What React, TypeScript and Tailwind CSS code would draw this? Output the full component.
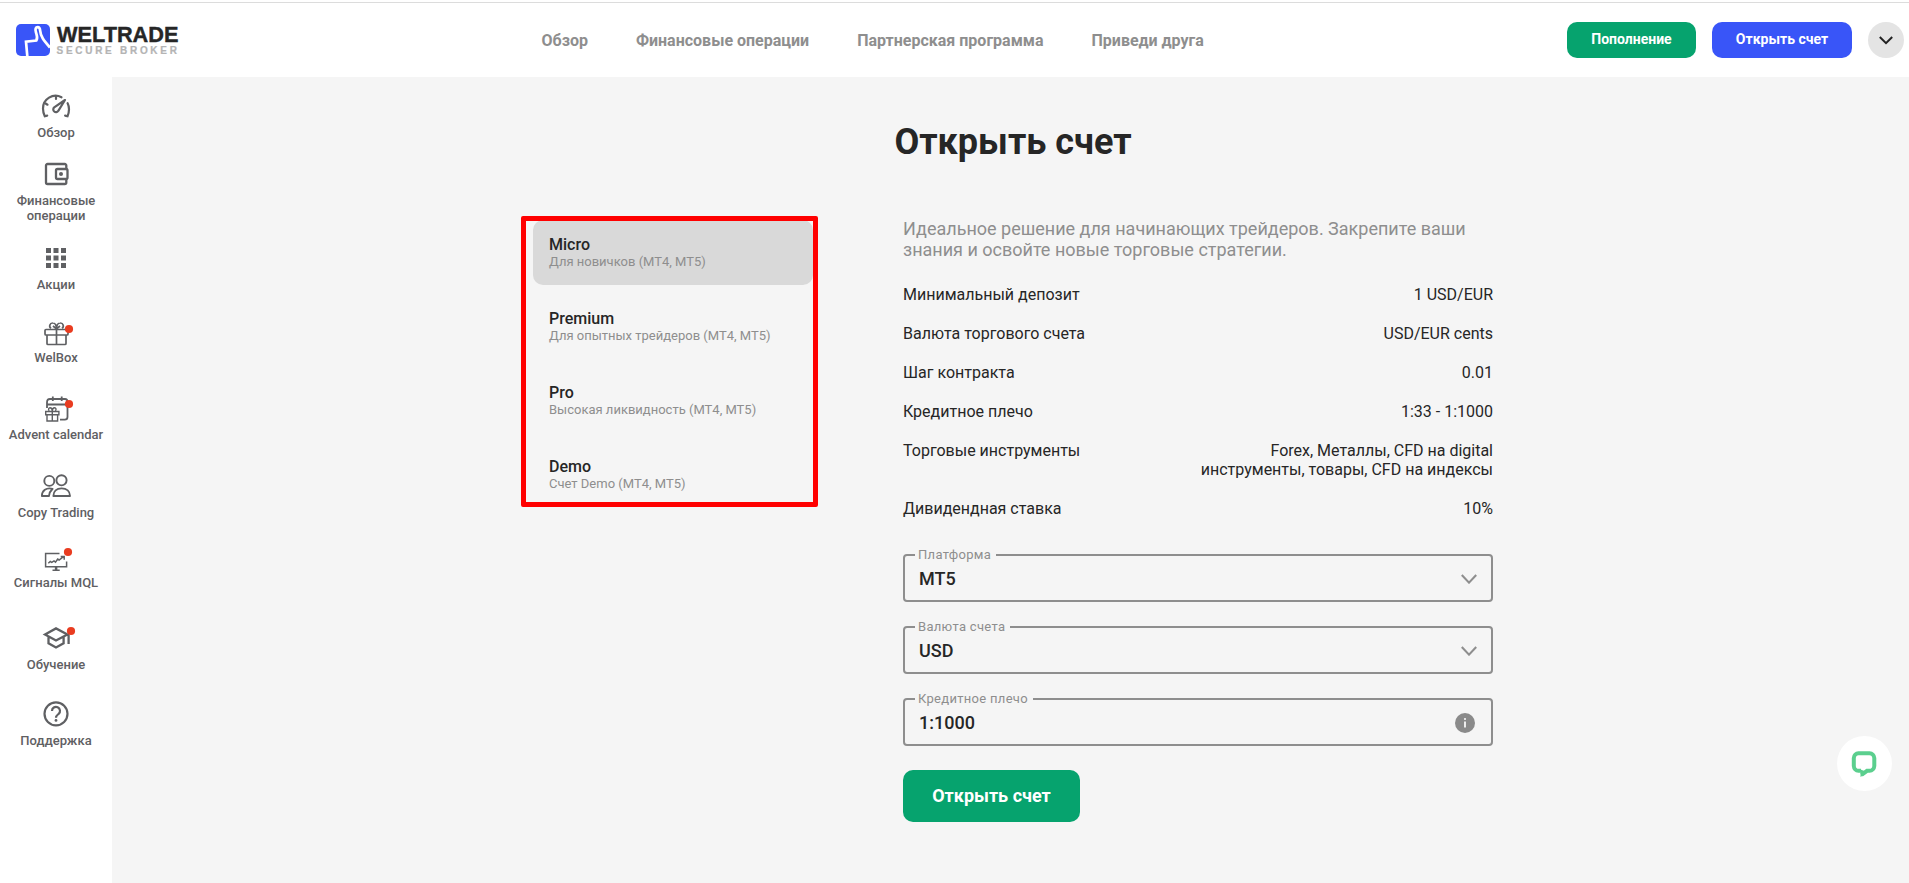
import { ReactNode, useState } from 'react';
import clsx from 'clsx';

const navLinks = ['Обзор', 'Финансовые операции', 'Партнерская программа', 'Приведи друга'];

const accounts = [
  { id: 'micro', title: 'Micro', note: 'Для новичков (MT4, MT5)' },
  { id: 'premium', title: 'Premium', note: 'Для опытных трейдеров (MT4, MT5)' },
  { id: 'pro', title: 'Pro', note: 'Высокая ликвидность (MT4, MT5)' },
  { id: 'demo', title: 'Demo', note: 'Счет Demo (MT4, MT5)' },
];

const details = [
  { label: 'Минимальный депозит', value: '1 USD/EUR' },
  { label: 'Валюта торгового счета', value: 'USD/EUR cents' },
  { label: 'Шаг контракта', value: '0.01' },
  { label: 'Кредитное плечо', value: '1:33 - 1:1000' },
  { label: 'Торговые инструменты', value: 'Forex, Металлы, CFD на digital инструменты, товары, CFD на индексы' },
  { label: 'Дивидендная ставка', value: '10%' },
];

const Dot = ({ x, y }: { x: number; y: number }) => (
  <circle cx={x} cy={y} r="4.1" fill="#e93c20" stroke="none" />
);

// every sidebar icon is drawn on a 32x28 canvas
const sideItems: { label: string; space: string; icon: ReactNode }[] = [
  {
    label: 'Обзор',
    space: 'mt-4',
    icon: (
      <g strokeWidth="2.2" strokeLinecap="round">
        <path d="M7.2 22.600 4.800 23.200q-1.800-3.600-1.800-7.600A12.600 12.600 0 0 1 21.500 4.300" />
        <path d="M27.600 10.200q1.400 2.600 1.400 6 0 3.600-1.500 7l-2.400-.6" />
        <path d="M16 3v3M5.600 10.500l1.900 1.200" />
        <path d="M25 7 14.200 14.400a2.700 2.700 0 1 0 4.100 3.400Z" strokeLinejoin="round" />
      </g>
    ),
  },
  {
    label: 'Финансовые операции',
    space: 'mt-[21px]',
    icon: (
      <g strokeWidth="2.3">
        <path d="M26.300 8V4.500a1.500 1.500 0 0 0-1.500-1.500H7.500A1.500 1.500 0 0 0 6 4.500v17A1.500 1.500 0 0 0 7.500 23h17.300a1.500 1.500 0 0 0 1.500-1.500V18" />
        <rect x="16" y="8" width="11.500" height="10" rx="1.500" />
        <circle cx="21" cy="13" r="2" fill="#5f6063" stroke="none" />
      </g>
    ),
  },
  {
    label: 'Акции',
    space: 'mt-[22px]',
    icon: (
      <path
        fill="#5f6063"
        stroke="none"
        d="M6 3h5v5H6zM13.500 3h5v5h-5zM21 3h5v5h-5zM6 10.500h5v5H6zM13.500 10.500h5v5h-5zM21 10.500h5v5h-5zM6 18h5v5H6zM13.500 18h5v5h-5zM21 18h5v5h-5z"
      />
    ),
  },
  {
    label: 'WelBox',
    space: 'mt-[26px]',
    icon: (
      <g strokeWidth="1.700">
        <rect x="5" y="11.500" width="23" height="5.500" rx="1" />
        <path d="M7 17v8.500q0 1 1 1h17q1 0 1-1V17M16.500 11v15.500" />
        <path d="M16.500 11c0-4-1.600-6-3.700-6a2.900 2.900 0 0 0-1.800 5.300M16.500 11c0-4 1.600-6 3.700-6a2.900 2.900 0 0 1 1.800 5.300M13 8l3.500 3L20 8" />
        <Dot x={29} y={11} />
      </g>
    ),
  },
  {
    label: 'Advent calendar',
    space: 'mt-[30px]',
    icon: (
      <g strokeWidth="1.800">
        <path d="M7 13V7.500Q7 4 10 4h15q2.500 0 2.500 3v15q0 2.700-2.700 2.700H20M7 9.500h20M12.800 1.500V6M21.700 1.500V6" />
        <path d="M5.700 16.500h13.200v3.300H5.700zM7 19.800v6.200h10.600v-6.200M12.300 16.500V26" strokeWidth="1.400" />
        <path d="M12.300 16.300c0-2.400-1-3.600-2.300-3.600s-2 1.900-.8 3.200M12.300 16.300c0-2.400 1-3.600 2.300-3.600s2 1.900.8 3.200" strokeWidth="1.400" />
        <Dot x={29} y={9} />
      </g>
    ),
  },
  {
    label: 'Copy Trading',
    space: 'mt-[31px]',
    icon: (
      <g strokeWidth="1.900">
        <circle cx="9.300" cy="7.900" r="5" />
        <circle cx="21.500" cy="7.300" r="5.100" />
        <path d="M13.400 23c0-4.700 3.200-7.600 8.200-7.600s8.400 2.900 8.400 7.600Z" strokeLinejoin="round" />
        <path d="M12.600 15.800C6.200 14.200 1.900 17.600 1.900 23H9q.3-4 3.600-7.200Z" strokeLinejoin="round" />
      </g>
    ),
  },
  {
    label: 'Сигналы MQL',
    space: 'mt-[23px]',
    icon: (
      <g strokeWidth="1.500">
        <path d="M19.500 10.600H5.600v13.200h21V18.500M12.500 27.200h7.200" />
        <path d="M16.100 24v3" strokeWidth="2.500" />
        <path d="m8.300 20.300 2-1.800 1.500.9 2.200-1.500 1.500 1.200 2.200-3 1.400.9 4.400-3.400M20.700 13.400h3.500v3.300" />
        <Dot x={28} y={9} />
      </g>
    ),
  },
  {
    label: 'Обучение',
    space: 'mt-[35px]',
    icon: (
      <g strokeWidth="2.300">
        <path d="M5 9.400 16 3.400l11.400 6L16 15.500ZM8.500 12v6.300L16 22.500l7.600-4.200V12M28.600 9.500V19" />
        <Dot x={31} y={6} />
      </g>
    ),
  },
  {
    label: 'Поддержка',
    space: 'mt-[29px]',
    icon: (
      <g strokeWidth="2.200">
        <circle cx="16" cy="12.800" r="11.500" />
        <path d="M12 9.900a4 4 0 1 1 6.600 3c-1.600 1.300-2.600 1.900-2.600 3.800" />
        <circle cx="16" cy="19.400" r="1.400" fill="#5f6063" stroke="none" />
      </g>
    ),
  },
];

function Logo() {
  return (
    <svg width="164" height="34" viewBox="0 0 164 34">
      <rect y="1" width="34" height="32" rx="5" fill="#3955f8" />
      <path
        d="M11.300 33 10 18.600 20.300 17.500C22 14.800 21.300 13.500 20 9.500c-1.100-3.500-.3-5.300 1.700-5.300 1.700 0 2.300 1.500 2.500 3.700.4 5.500 3.300 9.300 9.800 16.600"
        fill="none"
        stroke="#fff"
        strokeWidth="2.700"
      />
      <text x="41" y="18.700" fontFamily="Liberation Sans, Arial, sans-serif" fontWeight="700" fontSize="22" fill="#262626" stroke="#262626" strokeWidth="0.4" textLength="121.500" lengthAdjust="spacingAndGlyphs">
        WELTRADE
      </text>
      <text x="40.500" y="31.300" fontFamily="Liberation Sans, Arial, sans-serif" fontWeight="700" fontSize="10" fill="#b4b4b4" stroke="#b4b4b4" strokeWidth="0.200" letterSpacing="2.720">
        SECURE BROKER
      </text>
    </svg>
  );
}

function Field({ label, value, info }: { label: string; value: string; info?: boolean }) {
  return (
    <div className="relative flex h-12 items-center justify-between rounded border-2 border-[#8e8e8e] pr-3.5 pl-3.5">
      <span className="absolute -top-[9px] left-2.5 bg-[#f5f5f5] pr-[5px] pl-[3px] text-[13px] leading-[15px] tracking-[0.3px] text-[#8e8e8e]">
        {label}
      </span>
      <span className="text-[18px] leading-[21px] font-medium text-[#262626]">{value}</span>
      {info ? (
        <svg width="20" height="20" viewBox="0 0 20 20" className="mt-0.5 mr-0.5">
          <circle cx="10" cy="10" r="10" fill="#8a8a8a" />
          <path d="M10 8.500v6" stroke="#fff" strokeWidth="1.700" />
          <circle cx="10" cy="6" r="1" fill="#fff" />
        </svg>
      ) : (
        <svg width="16" height="10" viewBox="0 0 16 10" fill="none" stroke="#8e8e8e" strokeWidth="2.100" className="mt-px">
          <path d="m.8 1 7.200 7.600L15.200 1" />
        </svg>
      )}
    </div>
  );
}

export default function App() {
  const [active, setActive] = useState('micro');

  return (
    <div className="flex h-[883px] w-[1909px] flex-col overflow-hidden bg-white font-['Roboto',sans-serif] text-[#262626]">
      <div className="h-[3px] shrink-0 border-b border-[#dcdcdc]" />

      {/* Header */}
      <header className="flex h-[74px] shrink-0 items-center justify-between pr-[5px] pl-4">
        <div className="w-[525px]">
          <Logo />
        </div>
        <nav className="flex flex-1 gap-12 pl-[0.5px]">
          {navLinks.map((link) => (
            <a key={link} href="#" className="text-[16px] leading-[19px] font-bold text-[#8e8e8e]">
              {link}
            </a>
          ))}
        </nav>
        <div className="flex gap-4">
          <button className="h-9 w-[129px] rounded-[10px] bg-[#06a36e] pb-0.5 text-[14px] font-bold text-white">Пополнение</button>
          <button className="h-9 w-[140px] rounded-[10px] bg-[#3955f8] pb-0.5 text-[14px] font-bold text-white">Открыть счет</button>
          <button className="flex size-9 items-center justify-center rounded-full bg-[#e4e4e4]" aria-label="Меню">
            <svg width="14" height="9" viewBox="0 0 14 9" fill="none" stroke="#222" strokeWidth="2" className="mt-px">
              <path d="m.8 1 6.200 6.200L13.200 1" />
            </svg>
          </button>
        </div>
      </header>

      <div className="flex flex-1">
        {/* Sidebar */}
        <aside className="flex w-28 shrink-0 flex-col items-center">
          {sideItems.map((item) => (
            <a key={item.label} href="#" className={clsx('flex w-full flex-col items-center gap-1', item.space)}>
              <svg width="32" height="28" viewBox="0 0 32 28" fill="none" stroke="#5f6063" className="overflow-visible">
                {item.icon}
              </svg>
              <span className="text-center text-[13px] leading-[15px] font-medium text-[#5f6063]">{item.label}</span>
            </a>
          ))}
        </aside>

        {/* Account opening */}
        <main className="flex-1 bg-[#f5f5f5] pl-[421px]">
          <div className="w-[960px]">
            <h1 className="pt-[44px] text-center text-[36px] leading-[42px] font-bold">Открыть счет</h1>

            <div className="mt-[55px] flex justify-between">
              <div className="relative flex w-[280px] flex-col gap-[9px] pt-0.5">
                {accounts.map((a) => (
                  <button
                    key={a.id}
                    onClick={() => setActive(a.id)}
                    className={clsx(
                      'flex h-[65px] flex-col justify-center rounded-[10px] pb-px pl-4 text-left',
                      active === a.id && 'bg-[#d9d9d9]',
                    )}
                  >
                    <span className="text-[16px] leading-[19px] font-medium">{a.title}</span>
                    <span className="text-[13px] leading-[15px] text-[#8e8e8e]">{a.note}</span>
                  </button>
                ))}
                <div className="pointer-events-none absolute -top-[2px] -left-3 h-[291px] w-[297px] rounded-[2px] border-[5px] border-[#ff0000]" />
              </div>

              <div className="w-[590px]">
                <p className="text-[18px] leading-[21px] text-[#8e8e8e]">
                  Идеальное решение для начинающих трейдеров. Закрепите ваши знания и освойте новые торговые стратегии.
                </p>
                <dl className="mt-[25px] flex flex-col gap-5 text-[16px] leading-[19px]">
                  {details.map((d) => (
                    <div key={d.label} className="flex justify-between">
                      <dt>{d.label}</dt>
                      <dd className="max-w-[300px] text-right">{d.value}</dd>
                    </div>
                  ))}
                </dl>
                <div className="mt-9 flex flex-col gap-6">
                  <Field label="Платформа" value="MT5" />
                  <Field label="Валюта счета" value="USD" />
                  <Field label="Кредитное плечо" value="1:1000" info />
                </div>
                <button className="mt-6 h-[52px] w-[177px] rounded-[10px] bg-[#06a36e] pb-0.5 text-[18px] font-bold text-white">
                  Открыть счет
                </button>
              </div>
            </div>
          </div>
        </main>
      </div>

      {/* Chat widget */}
      <button className="fixed top-[736px] left-[1837px] flex size-[55px] items-center justify-center rounded-full bg-white" aria-label="Чат">
        <svg width="26" height="26" viewBox="0 0 26 26" fill="none" stroke="#5bcf8e" strokeWidth="4" className="mr-px">
          <path d="M10 19.800H7.500A5 5 0 0 1 2.800 15V7A5 5 0 0 1 7.500 2.300h11A5 5 0 0 1 23.300 7v8a5 5 0 0 1-4.800 4.800h-2.500L10.500 24" />
          <path d="M9.500 18.500V26l4-2.500V20Z" fill="#5bcf8e" stroke="none" />
        </svg>
      </button>
    </div>
  );
}
